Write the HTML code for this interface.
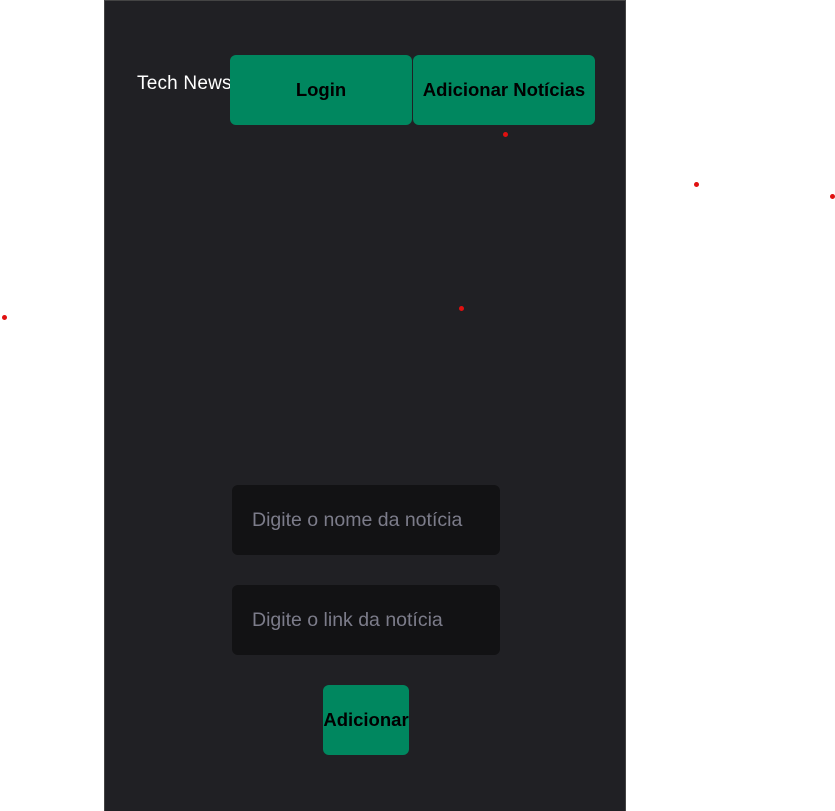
<!DOCTYPE html>
<html><head><meta charset="utf-8"><style>
html,body{margin:0;padding:0;width:835px;height:811px;background:#fff;overflow:hidden;position:relative;font-family:"Liberation Sans",sans-serif}
.panel{position:absolute;left:104px;top:0;width:520px;height:811px;background:#202024;border:1.5px solid #444;border-bottom:none;box-sizing:content-box}
.abs{position:absolute}
.btn{position:absolute;background:#00875F;border-radius:6px;color:#000;font-weight:bold;font-size:18.5px;display:flex;align-items:center;justify-content:center;white-space:nowrap}
.inp{position:absolute;background:#121214;border-radius:6px;color:#7c7c8a;font-size:19.5px;display:flex;align-items:center;padding-left:20px;box-sizing:border-box;white-space:nowrap}
.dot{position:absolute;width:5px;height:5px;border-radius:50%;background:#e01010}
</style></head><body>
<div class="panel"></div>
<div class="abs" style="left:137px;top:73px;color:#fff;font-size:19px;letter-spacing:0.2px">Tech News</div>
<div class="btn" style="left:230px;top:55px;width:182px;height:70px">Login</div>
<div class="btn" style="left:413px;top:55px;width:182px;height:70px">Adicionar Notícias</div>
<div class="inp" style="left:232px;top:485px;width:268px;height:70px">Digite o nome da notícia</div>
<div class="inp" style="left:232px;top:585px;width:268px;height:70px">Digite o link da notícia</div>
<div class="btn" style="left:323px;top:685px;width:86px;height:70px">Adicionar</div>
<div class="dot" style="left:503px;top:132px"></div>
<div class="dot" style="left:694px;top:182px"></div>
<div class="dot" style="left:830px;top:194px"></div>
<div class="dot" style="left:459px;top:306px"></div>
<div class="dot" style="left:2px;top:315px"></div>
</body></html>
